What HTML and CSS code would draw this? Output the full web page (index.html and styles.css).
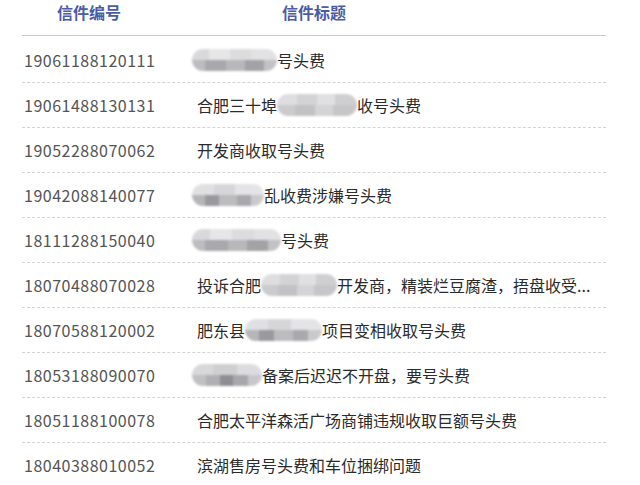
FILE: index.html
```html
<!DOCTYPE html>
<html lang="zh-CN">
<head>
<meta charset="utf-8">
<title>信件列表</title>
<link rel="stylesheet" href="styles.css">
</head>
<body>
<div class="table">
  <div class="head">
    <div class="h-no">信件编号</div>
    <div class="h-title">信件标题</div>
  </div>
  <div class="body">
    <div class="row"><span class="no">19061188120111</span><span class="title"><span class="mask lead m-a" style="width:85px"></span>号头费</span></div>
    <div class="row"><span class="no">19061488130131</span><span class="title">合肥三十埠<span class="mask m-b" style="width:80px"></span>收号头费</span></div>
    <div class="row"><span class="no">19052288070062</span><span class="title">开发商收取号头费</span></div>
    <div class="row"><span class="no">19042088140077</span><span class="title"><span class="mask lead m-c" style="width:72px"></span>乱收费涉嫌号头费</span></div>
    <div class="row"><span class="no">18111288150040</span><span class="title"><span class="mask lead m-a" style="width:89px"></span>号头费</span></div>
    <div class="row"><span class="no">18070488070028</span><span class="title">投诉合肥<span class="mask m-b" style="width:76px"></span>开发商，精装烂豆腐渣，捂盘收受...</span></div>
    <div class="row"><span class="no">18070588120002</span><span class="title">肥东县<span class="mask m-c" style="width:77px"></span>项目变相收取号头费</span></div>
    <div class="row"><span class="no">18053188090070</span><span class="title"><span class="mask lead m-d" style="width:70px"></span>备案后迟迟不开盘，要号头费</span></div>
    <div class="row"><span class="no">18051188100078</span><span class="title">合肥太平洋森活广场商铺违规收取巨额号头费</span></div>
    <div class="row"><span class="no">18040388010052</span><span class="title">滨湖售房号头费和车位捆绑问题</span></div>
  </div>
</div>
</body>
</html>
```

FILE: styles.css
```css
html, body {
  margin: 0;
  padding: 0;
  background: #ffffff;
}
body {
  font-family: "Noto Sans CJK SC", "Noto Sans", sans-serif;
  font-size: 16px;
}
.table {
  margin-left: 22px;
  width: 584px;
}
.head {
  display: flex;
  align-items: center;
  height: 35px;
  border-bottom: 1px solid #c9c9c9;
  color: #4b5ba6;
  font-weight: bold;
  font-size: 16px;
}
.h-no {
  width: 134px;
  text-align: center;
  margin-top: -11px;
}
.h-title {
  padding-left: 126px;
  margin-top: -11px;
}
.body {
  padding-top: 2px;
}
.row {
  display: flex;
  align-items: center;
  height: 44px;
  border-bottom: 1px dashed #d4d4d4;
}
.no {
  width: 175px;
  padding-left: 2px;
  box-sizing: border-box;
  color: #555555;
  letter-spacing: 0.5px;
  flex: none;
}
.title {
  color: #2b2b2b;
  white-space: nowrap;
  display: flex;
  align-items: center;
}
.mask {
  display: inline-block;
  height: 22px;
  border-radius: 11px;
  filter: blur(1.3px);
  flex: none;
}
.lead {
  margin-left: -5px;
}
.m-a {
  background:
    linear-gradient(90deg, #d9d9db 0 20%, #e6e6e8 20% 45%, #dcdcde 45% 70%, #e2e2e4 70% 100%) top / 100% 50% no-repeat,
    linear-gradient(90deg, #bdbdc0 0 15%, #a9a9ad 15% 40%, #b8b8bb 40% 62%, #a3a3a7 62% 85%, #c2c2c4 85% 100%) bottom / 100% 50% no-repeat;
}
.m-b {
  background:
    linear-gradient(90deg, #dedee0 0 25%, #d3d3d6 25% 50%, #e0e0e2 50% 72%, #cfcfd2 72% 100%) top / 100% 50% no-repeat,
    linear-gradient(90deg, #cbcbce 0 22%, #c2c2c5 22% 48%, #d4d4d6 48% 70%, #c6c6c9 70% 100%) bottom / 100% 50% no-repeat;
}
.m-c {
  background:
    linear-gradient(90deg, #e0e0e2 0 30%, #d6d6d8 30% 60%, #e4e4e6 60% 100%) top / 100% 50% no-repeat,
    linear-gradient(90deg, #b6b6b9 0 18%, #9a9a9e 18% 38%, #bcbcbf 38% 62%, #a9a9ad 62% 82%, #cacacc 82% 100%) bottom / 100% 50% no-repeat;
}
.m-d {
  background:
    linear-gradient(90deg, #d8d8da 0 30%, #cfcfd2 30% 65%, #dcdcde 65% 100%) top / 100% 50% no-repeat,
    linear-gradient(90deg, #c0c0c3 0 20%, #b0b0b4 20% 40%, #8f8f93 40% 58%, #a8a8ac 58% 80%, #c8c8cb 80% 100%) bottom / 100% 50% no-repeat;
}
```
